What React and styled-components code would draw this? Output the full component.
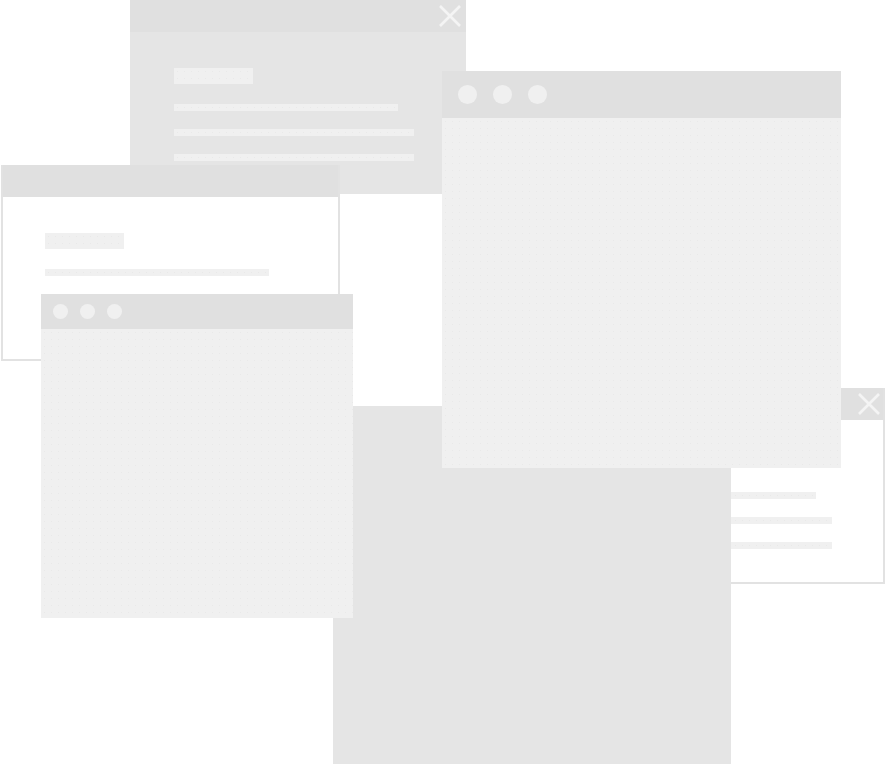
import React from 'react';
import styled, { createGlobalStyle, css } from 'styled-components';

const GlobalStyle = createGlobalStyle`
    html, body {
        margin: 0;
        padding: 0;
        background: #ffffff;
        overflow: hidden;
        font-family: "Liberation Sans", Arial, sans-serif;
    }
`;

const Desktop = styled.div`
    position: relative;
    width: 886px;
    height: 764px;
    overflow: hidden;
    background: #ffffff;
`;

const dotted = css`
    background-color: #f0f0f0;
    background-image: radial-gradient(#e9e9e9 0.6px, transparent 0.9px);
    background-size: 7px 7px;
`;

// windows are placed freely on the desktop, their position is the content
const Window = styled.div`
    position: absolute;
    display: flex;
    flex-direction: column;
    overflow: hidden;
    box-sizing: border-box;
    left: ${(p) => p.x}px;
    top: ${(p) => p.y}px;
    width: ${(p) => p.w}px;
    height: ${(p) => p.h}px;
    background: ${(p) => p.bg || '#e5e5e5'};
    border: ${(p) => (p.bordered ? '2px solid #e2e2e2' : 'none')};
    border-top: none;
`;

const TitleBar = styled.div`
    flex: none;
    display: flex;
    align-items: center;
    height: ${(p) => p.h}px;
    padding: 0 ${(p) => p.pad || 0}px;
    gap: ${(p) => p.gap || 0}px;
    background: #e0e0e0;
    margin: 0 ${(p) => (p.bordered ? -2 : 0)}px;
    justify-content: flex-end;
`;

const Dot = styled.span`
    width: ${(p) => p.size}px;
    height: ${(p) => p.size}px;
    border-radius: 50%;
    background: #f0f0f0;
`;

const DotRow = styled.div`
    display: flex;
    gap: ${(p) => p.gap}px;
    margin-right: auto;
`;

const CardBody = styled.div`
    flex: 1;
    display: flex;
    flex-direction: column;
    align-items: flex-start;
    padding: 36px 0 0 ${(p) => p.pad}px;
`;

const Heading = styled.div`
    width: 79px;
    height: 16px;
    margin-bottom: 20px;
    ${dotted};
`;

const Line = styled.div`
    width: ${(p) => p.w}px;
    height: 7px;
    margin-bottom: 18px;
    ${dotted};
`;

const DottedBody = styled.div`
    flex: 1;
    ${dotted};
`;

const CloseIcon = () => (
    <svg width="24" height="24" viewBox="0 0 24 24">
        <path d="M2 2 L22 22 M22 2 L2 22" stroke="#f4f4f4" strokeWidth="2.6" fill="none" />
    </svg>
);

const CardWindow = ({ x, y, w, h, bordered, closable }) => (
    <Window x={x} y={y} w={w} h={h} bordered={bordered} bg={bordered ? '#ffffff' : '#e5e5e5'}>
        <TitleBar h={32} pad={4} bordered={bordered}>
            {closable && <CloseIcon />}
        </TitleBar>
        <CardBody pad={bordered ? 42 : 44}>
            <Heading />
            <Line w={224} />
            <Line w={240} />
            <Line w={240} />
        </CardBody>
    </Window>
);

const BrowserWindow = ({ x, y, w, h, bar, dot, pad, gap }) => (
    <Window x={x} y={y} w={w} h={h}>
        <TitleBar h={bar} pad={pad}>
            <DotRow gap={gap}>
                <Dot size={dot} />
                <Dot size={dot} />
                <Dot size={dot} />
            </DotRow>
        </TitleBar>
        <DottedBody />
    </Window>
);

const App = () => (
    <>
        <GlobalStyle />
        <Desktop>
            <CardWindow x={130} y={0} w={336} h={194} closable />
            <CardWindow x={1} y={165} w={339} h={196} bordered />
            <CardWindow x={548} y={388} w={337} h={196} bordered closable />
            <Window x={333} y={406} w={398} h={360} />
            <BrowserWindow x={41} y={294} w={312} h={324} bar={35} dot={15} pad={12} gap={12} />
            <BrowserWindow x={442} y={71} w={399} h={397} bar={47} dot={19} pad={16} gap={16} />
        </Desktop>
    </>
);

export default App;
